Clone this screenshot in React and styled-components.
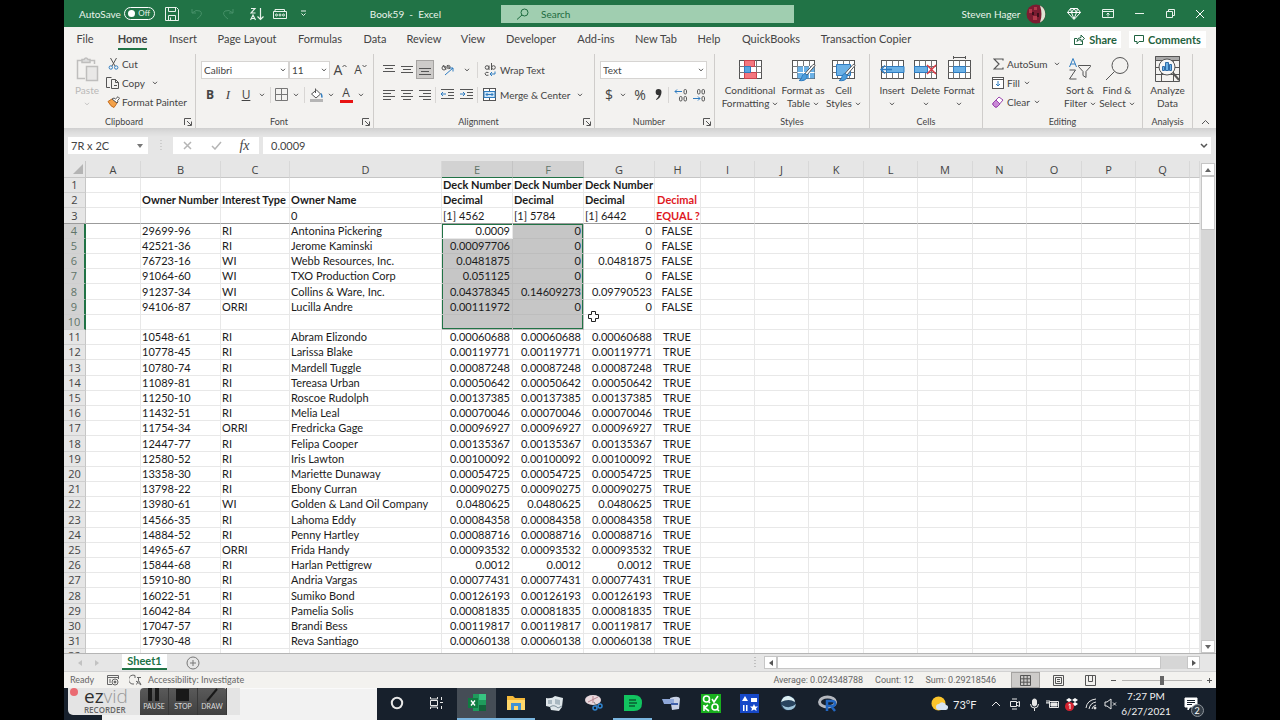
import React from "react";
import styled, { createGlobalStyle, css } from "styled-components";

const UI = `Lato, "Open Sans", sans-serif`;
const GREEN = "#217346";

const Global = createGlobalStyle`
  * { box-sizing: border-box; }
  html, body { margin: 0; background: #000; }
  body { font-family: ${UI}; font-size: 10px; color: #444; }
  button, input, select { font: inherit; color: inherit; margin: 0; padding: 0; border: 0; background: none; border-radius: 0; outline: none; }
  svg { display: block; flex: none; }
`;

/* ---------- generic parts ---------- */

const Screen = styled.div`
  min-height: 100vh;
  padding: 0 5vw;
  display: flex;
  flex-direction: column;
  background: #000;
  overflow: hidden;
`;

const Slot = styled.span`
  width: ${(p) => p.$w}px;
  flex: none;
  display: flex;
  align-items: center;
  justify-content: center;
`;

const IconButton = styled.button`
  width: ${(p) => p.$w || 18}px;
  height: ${(p) => p.$h || 19}px;
  flex: none;
  display: flex;
  align-items: center;
  justify-content: center;
  ${(p) => p.$on && css`background: #cdcbc9; border: 1px solid #a5a3a1;`}
`;

const Glyph = styled.span`
  font-size: ${(p) => p.$size || 12}px;
  font-weight: ${(p) => (p.$bold ? 700 : 400)};
  font-style: ${(p) => (p.$italic ? "italic" : "normal")};
  font-family: ${(p) => (p.$serif ? `"Liberation Serif", serif` : `"Open Sans", sans-serif`)};
  text-decoration: ${(p) => (p.$under ? "underline" : "none")};
  line-height: 14px;
`;

const Svg = ({ w = 14, h = 14, color = "#555", sw = 1, children }) => (
  <svg width={w} height={h} viewBox={`0 0 ${w} ${h}`} fill="none" stroke={color} strokeWidth={sw} aria-hidden="true">
    {children}
  </svg>
);

const Chevron = ({ color = "#555" }) => (
  <Svg w={6} h={4} color={color}><path d="M1 .8 3 2.9 5 .8" /></Svg>
);

/* ---------- title bar ---------- */

const TitleBar = styled.header`
  height: 27px;
  display: flex;
  align-items: center;
  background: ${GREEN};
  color: #e9f3ec;
`;
const TitleLeft = styled.div`
  width: 437px;
  flex: none;
  display: flex;
  align-items: center;
  padding-left: 15px;
`;
const AutoSave = styled.label`
  width: 76px;
  display: flex;
  align-items: center;
  justify-content: space-between;
`;
const Toggle = styled.input`
  appearance: none;
  display: none;
`;
const ToggleFace = styled.span`
  width: 31px;
  height: 13px;
  border: 1px solid #fff;
  border-radius: 7px;
  display: flex;
  align-items: center;
  justify-content: space-between;
  padding: 0 4px 0 3px;
  font-size: 8px;
  line-height: 11px;
  &::before { content: ""; width: 7px; height: 7px; border-radius: 50%; background: #fff; }
`;
const DocTitle = styled.span`
  margin-left: auto;
  margin-right: 60px;
  font-size: 10px;
`;
const SearchBox = styled.label`
  flex: 0 1 293px;
  height: 18px;
  display: flex;
  align-items: center;
  padding-left: 15px;
  background: #a0ceb0;
  color: #1e6b40;
`;
const SearchInput = styled.input`
  flex: 1;
  min-width: 0;
  margin-left: 11px;
  font-size: 10px;
  &::placeholder { color: #1e6b40; opacity: 1; }
`;
const TitleRight = styled.div`
  margin-left: auto;
  display: flex;
  align-items: center;
`;

/* ---------- ribbon ---------- */

const TabBar = styled.nav`
  height: 25px;
  display: flex;
  align-items: center;
  background: #f3f2f0;
  padding-right: 10px;
`;
const Tab = styled.button`
  width: ${(p) => p.$w}px;
  height: 25px;
  flex: none;
  font-size: 11px;
  white-space: nowrap;
  display: flex;
  justify-content: center;
  font-weight: ${(p) => (p.$active ? 700 : 400)};
  line-height: 20px;
  padding-top: 2px;
  span { border-bottom: 2px solid ${(p) => (p.$active ? GREEN : "transparent")}; height: 21px; }
`;
const TabActions = styled.div`
  margin-left: auto;
  display: flex;
  gap: 8px;
`;
const ActionButton = styled.button`
  height: 17px;
  width: ${(p) => p.$w}px;
  background: #fff;
  color: #1f6240;
  font-size: 11px;
  font-weight: 700;
  line-height: 16px;
  display: flex;
  align-items: center;
  justify-content: center;
  gap: 4px;
`;
const Ribbon = styled.section`
  height: 76px;
  display: flex;
  background: #f3f2f0;
`;
const Group = styled.div`
  width: ${(p) => p.$w}px;
  flex: none;
  margin: 2px 0 0;
  border-right: 1px solid #cfcdcb;
  display: flex;
  flex-direction: column;
`;
const GroupBody = styled.div`
  flex: 1;
  min-height: 0;
  display: flex;
  padding-left: ${(p) => p.$pad || 0}px;
`;
const GroupFoot = styled.div`
  height: 13px;
  display: flex;
  align-items: center;
  justify-content: center;
  padding: 0 2px;
  font-size: 9px;
  line-height: 12px;
  span { flex: 1; text-align: center; }
`;
const Stack = styled.div`
  display: flex;
  flex-direction: column;
  padding-top: ${(p) => p.$top || 0}px;
  width: ${(p) => (p.$w ? p.$w + "px" : "auto")};
  gap: ${(p) => p.$gap || 0}px;
`;
const Row = styled.div`
  display: flex;
  align-items: center;
  height: ${(p) => p.$h || 19}px;
`;
const TextButton = styled.button`
  display: flex;
  align-items: center;
  height: 19px;
  font-size: 10px;
  white-space: nowrap;
`;
const Label = styled.span`
  width: ${(p) => (p.$w ? p.$w + "px" : "auto")};
  padding-right: ${(p) => (p.$w ? 0 : 4)}px;
  text-align: left;
`;
const BigButton = styled.button`
  width: ${(p) => p.$w}px;
  height: 56px;
  flex: none;
  display: flex;
  flex-direction: column;
  align-items: center;
  font-size: 10px;
  line-height: 13px;
  white-space: nowrap;
  color: ${(p) => (p.$off ? "#b9b8b7" : "#444")};
`;
const BigIcon = styled.span`
  height: 30px;
  display: flex;
  align-items: center;
`;
const LabelLine = styled.span`
  height: 13px;
  display: flex;
  align-items: center;
  gap: 3px;
`;
const VLine = styled.span`
  width: 1px;
  height: 16px;
  margin: 0 ${(p) => p.$m || 1}px;
  background: ${(p) => (p.$clear ? "transparent" : "#d8d6d4")};
`;
const Combo = styled.span`
  display: grid;
  width: ${(p) => p.$w}px;
  height: 18px;
  align-items: center;
  border: 1px solid #d6d4d2;
  background: #fff;
  > * { grid-area: 1 / 1; }
  svg { justify-self: end; margin-right: 2px; pointer-events: none; }
`;
const Select = styled.select`
  appearance: none;
  width: 100%;
  height: 16px;
  padding-left: 2px;
  font-size: 10px;
`;
const Swatch = styled.span`
  display: flex;
  flex-direction: column;
  align-items: center;
  &::after { content: ""; width: 13px; height: 3px; background: ${(p) => p.$c}; }
`;

/* ---------- formula bar ---------- */

const FormulaBar = styled.section`
  height: 33px;
  padding: 9px 5px 7px 4px;
  display: flex;
  background: linear-gradient(#cfcfcf 0, #dcdcdc 4px, #e6e6e6 9px);
`;
const NameBox = styled.label`
  width: 80px;
  display: flex;
  align-items: center;
  background: #fff;
  padding: 0 4px 0 3px;
  input { width: 64px; flex: 1; font-size: 11px; }
`;
const FxBox = styled.div`
  width: 86px;
  display: flex;
  align-items: center;
  background: #fff;
  margin-right: 4px;
`;
const FormulaField = styled.label`
  flex: 1;
  display: flex;
  align-items: center;
  background: #fff;
  padding: 0 3px 0 8px;
  input { flex: 1; font-size: 11px; }
`;

/* ---------- worksheet ---------- */

const SheetArea = styled.main`
  height: 492px;
  flex: 1 0 auto;
  display: flex;
  background: #e6e6e6;
`;
const GridClip = styled.div`
  flex: 1;
  min-width: 0;
  height: 492px;
  overflow: hidden;
  background: #fff;
`;
const Grid = styled.table`
  width: 100%;
  table-layout: fixed;
  border-collapse: separate;
  border-spacing: 0;
  font-family: ${UI};
  font-size: 11px;
  color: #1b1b1b;
`;
const ColHead = styled.th`
  height: 17px;
  padding: 2px 0 0;
  font: 400 11px/14px "Open Sans", sans-serif;
  text-align: center;
  color: ${(p) => (p.$sel ? "#5f7468" : "#444")};
  background: ${(p) => (p.$sel ? "#d2d2d2" : "#e6e6e6")};
  border-right: 1px solid ${(p) => (p.$sel ? "#c4c4c4" : "#d8d8d8")};
  border-bottom: 1px solid ${(p) => (p.$sel ? GREEN : "#c6c6c6")};
`;
const Corner = styled.th`
  background: #e6e6e6;
  border-right: 1px solid #c6c6c6;
  border-bottom: 1px solid #c6c6c6;
  padding: 0;
  svg { margin-left: auto; }
`;
const RowHead = styled.th`
  padding: 0;
  font: 400 11px/14px "Open Sans", sans-serif;
  text-align: center;
  color: ${(p) => (p.$sel ? "#5f7468" : "#444")};
  background: ${(p) => (p.$sel ? "#d2d2d2" : "#e6e6e6")};
  border-right: ${(p) => (p.$sel ? `2px solid ${GREEN}` : "1px solid #c6c6c6")};
  border-bottom: 1px solid ${(p) => (p.$frozen ? "#9b9b9b" : "#cfcfcf")};
`;
const BodyRow = styled.tr`
  height: 15px;
  &:nth-child(5n + 3) { height: 16px; }
`;
const Cell = styled.td`
  position: relative;
  padding: 0 2px 0 1px;
  line-height: 14px;
  white-space: nowrap;
  text-align: ${(p) => p.$align || "left"};
  font-weight: ${(p) => (p.$bold ? 700 : 400)};
  color: ${(p) => (p.$red ? "#e0191f" : "inherit")};
  background: ${(p) => (p.$sel ? "#c6c6c6" : "#fff")};
  border-right: 1px solid ${(p) => (p.$sel ? "#bdbdbd" : "#e8e8e8")};
  border-bottom: 1px solid ${(p) => (p.$frozen ? "#9b9b9b" : p.$sel ? "#bdbdbd" : "#e8e8e8")};
  ${(p) => p.$edge && css`box-shadow: ${p.$edge};`}
`;
const CrossCursor = styled.span`
  position: absolute;
  left: 3px;
  top: -5px;
  z-index: 1;
`;
const VScroll = styled.div`
  width: 16px;
  padding: 2px 1px 0;
  display: flex;
  flex-direction: column;
  background: #e6e6e6;
`;
const ScrollButton = styled.button`
  width: ${(p) => (p.$row ? 13 : 14)}px;
  height: 13px;
  flex: none;
  background: #fff;
  border: 1px solid #c6c6c6;
  display: flex;
  align-items: center;
  justify-content: center;
`;
const ScrollTrack = styled.div`
  flex: 1;
  background: #d6d6d6;
`;
const ScrollThumb = styled.div`
  height: 54px;
  background: #fff;
  border: 1px solid #c6c6c6;
`;

/* ---------- sheet tabs and status bar ---------- */

const SheetBar = styled.div`
  height: 19px;
  display: flex;
  align-items: center;
  background: #e6e6e6;
  border-top: 1px solid #b5b5b5;
  border-bottom: 1px solid #d2d2d2;
  padding: 0 16px 0 7px;
`;
const SheetTab = styled.button`
  width: 45px;
  height: 16px;
  margin: 0 18px 0 10px;
  align-self: flex-start;
  background: #fff;
  color: ${GREEN};
  border-bottom: 2px solid ${GREEN};
  font-size: 11px;
  font-weight: 700;
  line-height: 14px;
`;
const Grip = styled.span`
  margin-left: auto;
  margin-right: 8px;
`;
const HScroll = styled.div`
  flex: 0 1 436px;
  height: 13px;
  display: flex;
`;
const HThumb = styled.div`
  flex: 1;
  background: #fff;
  border: 1px solid #c6c6c6;
`;
const HTail = styled.div`
  width: 26px;
  background: #d6d6d6;
`;
const StatusBar = styled.footer`
  height: 16px;
  display: flex;
  align-items: center;
  background: #f3f2ef;
  color: #666;
  font-size: 9px;
  line-height: 14px;
  padding-left: 6px;
`;
const Stats = styled.div`
  margin-left: auto;
  margin-right: 15px;
  display: flex;
  gap: 12px;
  font-family: Roboto, sans-serif;
`;
const Zoom = styled.input`
  appearance: none;
  width: 80px;
  height: 12px;
  background: linear-gradient(#b5b3b1, #b5b3b1) center / 100% 1px no-repeat;
  &::-webkit-slider-thumb { appearance: none; width: 4px; height: 9px; background: #666; }
`;

/* ---------- task bar ---------- */

const TaskBar = styled.div`
  position: relative;
  height: 32px;
  display: flex;
  background: #17202c;
`;
const StartArea = styled.div`width: 38px;`;
const SearchArea = styled.div`
  width: 275px;
  background: #f2f2f2;
  border-top: 1px solid #fafafa;
`;
const Task = styled.button`
  width: 39px;
  height: 32px;
  margin-left: ${(p) => (p.$first ? 2 : 0)}px;
  display: flex;
  align-items: center;
  justify-content: center;
  background: ${(p) => (p.$active ? "#454d56" : "transparent")};
  border-bottom: 2px solid ${(p) => (p.$open ? "#7ab6e0" : "transparent")};
`;
const Tray = styled.div`
  margin-left: auto;
  display: flex;
  align-items: center;
  color: #f0f0f0;
`;
const Temp = styled.span`
  width: 38px;
  padding-left: 1px;
  font-size: 11px;
`;
const Clock = styled.div`
  width: 60px;
  text-align: center;
  font-size: 10px;
  line-height: 15px;
`;
const Notify = styled.button`
  width: 30px;
  height: 32px;
  margin-right: 10px;
  display: grid;
  place-items: center;
  > * { grid-area: 1 / 1; }
`;
const NotifyCount = styled.span`
  width: 13px;
  height: 13px;
  margin: 12px 0 0 12px;
  border-radius: 50%;
  background: #333c46;
  border: 1px solid #8d949b;
  color: #fff;
  font-size: 9px;
  line-height: 11px;
`;
const Recorder = styled.div`
  position: absolute;
  left: 4px;
  top: 0;
  width: 172px;
  height: 27px;
  display: flex;
  background: #e4e4e4;
  border-radius: 0 0 0 5px;
`;
const RecDot = styled.span`
  width: 8px;
  height: 8px;
  margin: 0 6px 0 2px;
  border-radius: 50%;
  background: #ea6b72;
`;
const Brand = styled.div`
  width: 56px;
  color: #2f2f2f;
  font-family: "Open Sans", sans-serif;
  display: flex;
  flex-direction: column;
  b { font-weight: 400; font-size: 19px; line-height: 17px; }
  i { font-style: normal; font-weight: 300; color: #999; }
  small { font-size: 8px; line-height: 9px; font-weight: 600; color: #666; }
`;
const RecButtons = styled.div`
  display: flex;
  height: 27px;
  background: linear-gradient(#5a5a5a, #404040);
  border-radius: 4px 4px 0 0;
`;
const RecButton = styled.button`
  width: 29px;
  border-right: 1px solid #383838;
  color: #dcdcdc;
  font-size: 7px;
  line-height: 9px;
  display: flex;
  flex-direction: column;
  align-items: center;
`;

/* ---------- data ---------- */

const TABS = [["File", 42], ["Home", 53], ["Insert", 48], ["Page Layout", 80], ["Formulas", 66], ["Data", 44], ["Review", 54], ["View", 44], ["Developer", 72], ["Add-ins", 58], ["New Tab", 62], ["Help", 44], ["QuickBooks", 80], ["Transaction Copier", 110]];

const COLS = [["A", 55], ["B", 80], ["C", 69], ["D", 152], ["E", 71], ["F", 71], ["G", 71], ["H", 46], ["I", 54], ["J", 54], ["K", 55], ["L", 54], ["M", 55], ["N", 54], ["O", 55], ["P", 54], ["Q", 54], ["", 0]];

const same = (id, type, name, n) => [id, type, name, n, n, n, "TRUE"];
const ROWS = [
  ["", "", "", "Deck Number", "Deck Number", "Deck Number", ""],
  ["Owner Number", "Interest Type", "Owner Name", "Decimal", "Decimal", "Decimal", "Decimal"],
  ["", "", "0", "[1] 4562", "[1] 5784", "[1] 6442", "EQUAL ?"],
  ["29699-96", "RI", "Antonina Pickering", "0.0009", "0", "0", "FALSE"],
  ["42521-36", "RI", "Jerome Kaminski", "0.00097706", "0", "0", "FALSE"],
  ["76723-16", "WI", "Webb Resources, Inc.", "0.0481875", "0", "0.0481875", "FALSE"],
  ["91064-60", "WI", "TXO Production Corp", "0.051125", "0", "0", "FALSE"],
  ["91237-34", "WI", "Collins & Ware, Inc.", "0.04378345", "0.14609273", "0.09790523", "FALSE"],
  ["94106-87", "ORRI", "Lucilla Andre", "0.00111972", "0", "0", "FALSE"],
  ["", "", "", "", "", "", ""],
  same("10548-61", "RI", "Abram Elizondo", "0.00060688"),
  same("10778-45", "RI", "Larissa Blake", "0.00119771"),
  same("10780-74", "RI", "Mardell Tuggle", "0.00087248"),
  same("11089-81", "RI", "Tereasa Urban", "0.00050642"),
  same("11250-10", "RI", "Roscoe Rudolph", "0.00137385"),
  same("11432-51", "RI", "Melia Leal", "0.00070046"),
  same("11754-34", "ORRI", "Fredricka Gage", "0.00096927"),
  same("12447-77", "RI", "Felipa Cooper", "0.00135367"),
  same("12580-52", "RI", "Iris Lawton", "0.00100092"),
  same("13358-30", "RI", "Mariette Dunaway", "0.00054725"),
  same("13798-22", "RI", "Ebony Curran", "0.00090275"),
  same("13980-61", "WI", "Golden & Land Oil Company", "0.0480625"),
  same("14566-35", "RI", "Lahoma Eddy", "0.00084358"),
  same("14884-52", "RI", "Penny Hartley", "0.00088716"),
  same("14965-67", "ORRI", "Frida Handy", "0.00093532"),
  same("15844-68", "RI", "Harlan Pettigrew", "0.0012"),
  same("15910-80", "RI", "Andria Vargas", "0.00077431"),
  same("16022-51", "RI", "Sumiko Bond", "0.00126193"),
  same("16042-84", "RI", "Pamelia Solis", "0.00081835"),
  same("17047-57", "RI", "Brandi Bess", "0.00119817"),
  same("17930-48", "RI", "Reva Santiago", "0.00060138"),
];

/* ---------- icons ---------- */

const Lines = ({ rows, y = 1 }) => (
  <Svg w={12} h={12}>
    {rows.map(([x, w], i) => <path key={i} d={`M${x} ${y + i * 3 + 0.5}h${w}`} />)}
  </Svg>
);
const ALIGN_TOP = [[0, 12], [2, 8], [0, 12]];
const ALIGN_LEFT = [[0, 12], [0, 8], [0, 12], [0, 8]];
const ALIGN_MID = [[0, 12], [2, 8], [0, 12], [2, 8]];
const ALIGN_RIGHT = [[0, 12], [4, 8], [0, 12], [4, 8]];

const Indent = ({ right }) => (
  <Svg w={13} h={11}>
    <path d="M0 .5h13M7 3.5h6M7 6.5h6M0 9.5h13" />
    <path stroke="#2f7cc0" d={right ? "M0 5h5M3 3l2 2-2 2" : "M5 5H0M2 3 0 5l2 2"} />
  </Svg>
);
const DecimalIcon = ({ less }) => (
  <Svg w={14} h={14}>
    {less ? (
      <>
        <rect x="5.5" y="1.5" width="2.500" height="4.500" rx="1.200" /><rect x="10" y="1.500" width="2.500" height="4.500" rx="1.200" />
        <rect x="10" y="8.500" width="2.500" height="4.500" rx="1.200" />
        <path d="M1 10.500h7M6 8.500l2 2-2 2" stroke="#2f7cc0" />
      </>
    ) : (
      <>
        <rect x="10" y="1.500" width="2.500" height="4.500" rx="1.200" />
        <rect x="5.5" y="8.500" width="2.500" height="4.500" rx="1.200" /><rect x="10" y="8.500" width="2.500" height="4.500" rx="1.200" />
        <path d="M8 3.500H1M3 1.500 1 3.500l2 2" stroke="#2f7cc0" />
      </>
    )}
  </Svg>
);
const WrapIcon = () => (
  <Svg w={12} h={14}>
    <circle cx="3" cy="4.500" r="1.800" /><path d="M5 2.500V7M7.500 0v7" /><circle cx="9.500" cy="4.500" r="1.800" />
    <path d="M4.500 9.500q-3-1-3.500 1.300.500 2.400 3.500 1.400" />
    <path d="M11 8.500v2.500H6M8 9l-2 2 2 2" stroke="#2f7cc0" />
  </Svg>
);
const Launcher = () => (
  <IconButton $w={11} $h={12} aria-label="More options">
    <Svg w={8} h={8}><path d="M.5 7V.5H7M3 3l4 4M7.500 3.500v4h-4" /></Svg>
  </IconButton>
);
const TableGrid = ({ children }) => (
  <Svg w={25} h={26}>
    <rect x="1.500" y="4.500" width="22" height="18" fill="#fff" />
    <path d="M1.500 10.500h22M1.500 16.500h22M6.500 4.500v18M12.500 4.500v18M18.500 4.500v18" stroke="#777" />
    {children}
  </Svg>
);
const Brush = () => (
  <g>
    <path d="M24 9.500 16 19l-2-1.500L22 8.500q2-1 2 1Z" fill="#fff" stroke="#555" />
    <path d="M14 17.500q3 1 2 4-2 4-8 3 3-1 3-4 1-3 3-3Z" fill="#4e9edb" stroke="#2f7cc0" />
  </g>
);

const CutIcon = () => (
  <Svg w={11} h={13}>
    <path d="M2.500 1 7 9M8.500 1 4 9" />
    <circle cx="2.800" cy="10.500" r="1.700" stroke="#2f7cc0" /><circle cx="8.200" cy="10.500" r="1.700" stroke="#2f7cc0" />
  </Svg>
);
const CopyIcon = () => (
  <Svg w={14} h={14}>
    <path d="M4 11.500H.500v-10h5M5.500 3.500h4l3 3v6h-7ZM9.500 3.500v3h3M8 9.500h3" />
  </Svg>
);
const PainterIcon = () => (
  <Svg w={13} h={12}>
    <path d="M1 5.500 5 3l5 4-3 4.500Q4 11 1 5.500Z" fill="#f3a24a" stroke="#c56c1c" />
    <path d="M5 3 7 2l1.500 1L11 .7l1.500 1.500-2 2.500.5 1.300L10 7Z" fill="#fff" />
  </Svg>
);
const PasteIcon = () => (
  <Svg w={24} h={26} color="#bfbebd" sw={1.500}>
    <path d="M10 22.500H2.500v-18H7M15 4.500h4.500V8" /><path d="M7 6.500v-3h2q2-3 4 0h2v3Z" fill="#ddd" />
    <rect x="11.500" y="10.500" width="11" height="14" fill="#e9e8e7" />
  </Svg>
);

/* ---------- page sections ---------- */

function Title() {
  const c = "#e9f3ec";
  return (
    <TitleBar>
      <TitleLeft>
        <AutoSave>AutoSave<Toggle type="checkbox" /><ToggleFace>Off</ToggleFace></AutoSave>
        <IconButton $w={33} aria-label="Save">
          <Svg w={14} h={14} color={c}><path d="M.5.500h11l2 2v11H.5ZM3.500.500v4h7v-4M3.500 13.500V8.500h7v5M5.500 13.500v-3" /></Svg>
        </IconButton>
        <IconButton $w={18} aria-label="Undo"><Svg w={12} h={12} color="#469068"><path d="M1 1v4h4M1 5q4-4 8-2 4 3-3 8" /></Svg></IconButton>
        <IconButton $w={44} aria-label="Redo"><Svg w={12} h={12} color="#469068"><path d="M11 1v4H7M11 5Q7 1 3 3q-4 3 3 8" /></Svg></IconButton>
        <IconButton $w={14} aria-label="Sort descending">
          <Svg w={14} h={14} color={c} sw={1.200}><path d="M1 1.500h4L1 6h4.500M.500 13 3 8l2.500 5M1.500 11.500h3M10.500 1v11M7.500 9.500l3 3 3-3" /></Svg>
        </IconButton>
        <IconButton $w={32} aria-label="Record">
          <Svg w={14} h={10} color={c}><path d="M2 2.500V.500h9.500V3M.500 2.500h13v7H.5Z" /><circle cx="3.500" cy="6" r="1" /><circle cx="7" cy="6" r="1" /><circle cx="10.500" cy="6" r="1" /></Svg>
        </IconButton>
        <IconButton $w={14} aria-label="Customize toolbar"><Svg w={7} h={7} color={c}><path d="M1 1h5M1.500 3.500l2 2 2-2" /></Svg></IconButton>
        <DocTitle>Book59&nbsp; - &nbsp;Excel</DocTitle>
      </TitleLeft>
      <SearchBox>
        <Svg w={14} h={12} color="#1e6b40"><circle cx="8.500" cy="4.500" r="3.500" /><path d="M6 7 1 11.500" /></Svg>
        <SearchInput aria-label="Search" placeholder="Search" />
      </SearchBox>
      <TitleRight>
        <Slot $w={70}>Steven Hager</Slot>
        <Slot $w={20}>
          <svg width="20" height="20" viewBox="0 0 20 20" aria-hidden="true">
            <circle cx="10" cy="10" r="9.500" fill="#7c1c31" />
            <path d="M14 1.500a9.500 9.500 0 0 1 0 17q3-8 0-17" fill="#dfe5d5" />
            <path d="M3 5h3v4H3Zm5-2h3v3H8Zm-1 9h4v4H7Z" fill="#b23a4b" /><path d="M6 8h2v3H6Zm5 1h2v4h-2Z" fill="#3d0e1a" />
          </svg>
        </Slot>
        <IconButton $w={56} aria-label="Rewards"><Svg w={14} h={12} color="#fff"><path d="M3.500.500h7l3 4L7 11.500.500 4.500ZM.500 4.500h13M3.500.500l1 4L7 11l2.500-6.500 1-4M7 .500 4.500 4.500M7 .500l2.500 4" /></Svg></IconButton>
        <IconButton $w={12} aria-label="Ribbon display"><Svg w={12} h={9} color={c}><path d="M.500.500h11v8H.500ZM.500 2.500h11M6 7.500V4M4.500 5.500 6 4l1.500 1.500" /></Svg></IconButton>
        <IconButton $w={50} aria-label="Minimize"><Svg w={9} h={3} color={c}><path d="M0 1.500h9" /></Svg></IconButton>
        <IconButton $w={12} aria-label="Restore"><Svg w={9} h={9} color={c}><path d="M.500 2.500h6v6h-6ZM2.500 2.500v-2h6v6h-2" /></Svg></IconButton>
        <Slot $w={8} />
        <IconButton $w={32} aria-label="Close"><Svg w={10} h={10} color="#fff"><path d="m1 1 8 8M9 1 1 9" /></Svg></IconButton>
      </TitleRight>
    </TitleBar>
  );
}

const Big = ({ w, icon, lines, drop, off }) => (
  <BigButton $w={w} $off={off}>
    <BigIcon>{icon}</BigIcon>
    {lines.map((t, i) => (
      <LabelLine key={i}>{t}{drop && i === lines.length - 1 && <Chevron color={off ? "#c5c4c3" : "#555"} />}</LabelLine>
    ))}
  </BigButton>
);

const Foot = ({ children, launch }) => <GroupFoot><span>{children}</span>{launch && <Launcher />}</GroupFoot>;

function RibbonArea() {
  return (
    <Ribbon>
      <Group $w={132}>
        <GroupBody $pad={6}>
          <Big w={34} off drop lines={["Paste", ""]} icon={<PasteIcon />} />
          <Stack>
            <TextButton><Slot $w={18}><CutIcon /></Slot><Label>Cut</Label></TextButton>
            <TextButton><Slot $w={18}><CopyIcon /></Slot><Label $w={30}>Copy</Label><Chevron /></TextButton>
            <TextButton><Slot $w={18}><PainterIcon /></Slot><Label>Format Painter</Label></TextButton>
          </Stack>
        </GroupBody>
        <Foot launch>Clipboard</Foot>
      </Group>

      <Group $w={178}>
        <GroupBody $pad={5}>
          <Stack $top={6} $gap={6}>
            <Row>
              <Combo $w={88}><Select aria-label="Font"><option>Calibri</option></Select><Chevron /></Combo>
              <Combo $w={41}><Select aria-label="Font size"><option>11</option></Select><Chevron /></Combo>
              <IconButton $w={21} aria-label="Increase font size"><Glyph $size={14}>A</Glyph><Svg w={5} h={12}><path d="M.500 3 2.500 1l2 2" /></Svg></IconButton>
              <IconButton $w={19} aria-label="Decrease font size"><Glyph $size={12}>A</Glyph><Svg w={5} h={12}><path d="m.500 1 2 2 2-2" /></Svg></IconButton>
            </Row>
            <Row>
              <IconButton aria-label="Bold"><Glyph $bold>B</Glyph></IconButton>
              <IconButton aria-label="Italic"><Glyph $italic $serif $size={13}>I</Glyph></IconButton>
              <IconButton aria-label="Underline"><Glyph $under>U</Glyph></IconButton>
              <Slot $w={14}><Chevron /></Slot><VLine />
              <IconButton aria-label="Borders"><Svg w={13} h={13} color="#777"><path d="M.500.500h12v12H.500ZM6.500 0v13M0 6.500h13" /></Svg></IconButton>
              <Slot $w={12}><Chevron /></Slot><VLine $m={2} />
              <IconButton aria-label="Fill color">
                <Swatch $c="#b5b5b5"><Svg w={13} h={11}><path d="m1.500 6 5-4 4 4-4.500 4ZM5.500 5V.500" fill="#fff" /><path d="M11 5.500q1.500 3 .5 4" stroke="#2f7cc0" strokeWidth="1.500" /></Svg></Swatch>
              </IconButton>
              <Slot $w={12}><Chevron /></Slot>
              <IconButton aria-label="Font color"><Swatch $c="#e81313"><Glyph $size={12}>A</Glyph></Swatch></IconButton>
              <Slot $w={12}><Chevron /></Slot>
            </Row>
          </Stack>
        </GroupBody>
        <Foot launch>Font</Foot>
      </Group>

      <Group $w={221}>
        <GroupBody $pad={6}>
          <Stack $top={6} $gap={6}>
            <Row>
              <IconButton aria-label="Top align"><Lines rows={ALIGN_TOP} y={1} /></IconButton>
              <IconButton aria-label="Middle align"><Lines rows={ALIGN_TOP} y={2} /></IconButton>
              <IconButton $on aria-label="Bottom align"><Lines rows={ALIGN_TOP} y={4} /></IconButton>
              <VLine $clear />
              <IconButton $w={21} aria-label="Orientation">
                <Svg w={14} h={14}><circle cx="3" cy="5" r="2" /><path d="M5 6.500 2 2M6 2l3 4" /><circle cx="7.500" cy="4" r="1.600" /><path d="M4 12 12 5M12 8.500V5H9" stroke="#2f7cc0" /></Svg>
              </IconButton>
              <Slot $w={18}><Chevron /></Slot><VLine />
              <TextButton><Slot $w={21}><WrapIcon /></Slot><Label>Wrap Text</Label></TextButton>
            </Row>
            <Row>
              <IconButton aria-label="Align left"><Lines rows={ALIGN_LEFT} /></IconButton>
              <IconButton aria-label="Center"><Lines rows={ALIGN_MID} /></IconButton>
              <IconButton aria-label="Align right"><Lines rows={ALIGN_RIGHT} /></IconButton>
              <VLine />
              <IconButton $w={20} aria-label="Decrease indent"><Indent /></IconButton>
              <IconButton $w={19} aria-label="Increase indent"><Indent right /></IconButton>
              <VLine />
              <TextButton>
                <Slot $w={21}>
                  <Svg w={13} h={13}><rect x=".500" y=".500" width="12" height="12" fill="#fff" /><rect x="1" y="3.500" width="11" height="6" fill="#cfe4f5" stroke="#2f7cc0" /><path d="M6.500 0v3M6.500 10v3" /><path d="M3 6.500h7M4.500 5 3 6.500 4.500 8M8.500 5 10 6.500 8.500 8" stroke="#2f7cc0" /></Svg>
                </Slot>
                <Label $w={77}>Merge &amp; Center</Label><Chevron />
              </TextButton>
            </Row>
          </Stack>
        </GroupBody>
        <Foot launch>Alignment</Foot>
      </Group>

      <Group $w={120}>
        <GroupBody $pad={5}>
          <Stack $top={6} $gap={6}>
            <Row><Combo $w={107}><Select aria-label="Number format"><option>Text</option></Select><Chevron /></Combo></Row>
            <Row>
              <IconButton aria-label="Currency"><Glyph $size={14}>$</Glyph></IconButton>
              <Slot $w={10}><Chevron /></Slot>
              <IconButton $w={24} aria-label="Percent"><Glyph $size={14}>%</Glyph></IconButton>
              <IconButton $w={13} aria-label="Comma style"><svg width="7" height="11" viewBox="0 0 7 11" aria-hidden="true"><path d="M3.500 0a3 3 0 0 1 3 3q0 5-5 8l-.500-.600Q3.500 8.500 3.800 6A3 3 0 1 1 3.500 0Z" fill="#333" /></svg></IconButton>
              <VLine $m={3} />
              <IconButton aria-label="Increase decimal"><DecimalIcon /></IconButton>
              <IconButton aria-label="Decrease decimal"><DecimalIcon less /></IconButton>
            </Row>
          </Stack>
        </GroupBody>
        <Foot launch>Number</Foot>
      </Group>

      <Group $w={155}>
        <GroupBody>
          <Big w={70} drop lines={["Conditional", "Formatting"]} icon={<TableGrid><path d="M6.500 4.500h10v6h-10ZM6.500 16.500h12v6h-12Z" fill="#f4777f" stroke="#c9444e" /><path d="M6.500 10.500h6v6h-6Z" fill="#5aa7e0" stroke="#2f7cc0" /></TableGrid>} />
          <Big w={36} drop lines={["Format as", "Table"]} icon={<TableGrid><path d="M6.500 10.500h17v12h-17Z" fill="#6bb1e6" stroke="none" /><path d="M6.500 16.500h17M12.500 10v12M18.500 10v12" stroke="#fff" /><Brush /></TableGrid>} />
          <Big w={45} drop lines={["Cell", "Styles"]} icon={<TableGrid><path d="M5.500 8.500h14v11h-14Z" fill="#6bb1e6" stroke="#2f7cc0" /><Brush /></TableGrid>} />
        </GroupBody>
        <Foot>Styles</Foot>
      </Group>

      <Group $w={113}>
        <GroupBody $pad={5}>
          <Big w={34} drop lines={["Insert", ""]} icon={<TableGrid><path d="M6.500 10.500H24v6H6.500Z" fill="#6bb1e6" stroke="#2f7cc0" /><path d="M12 13.500H1M5 9.500l-4 4 4 4" stroke="#2f7cc0" strokeWidth="1.500" /></TableGrid>} />
          <Big w={33} drop lines={["Delete", ""]} icon={<TableGrid><path d="M1.500 10.500h13v6h-13Z" fill="#6bb1e6" stroke="#2f7cc0" /><path d="m14 9 9 9M23 9l-9 9" stroke="#d93a44" strokeWidth="1.500" /></TableGrid>} />
          <Big w={34} drop lines={["Format", ""]} icon={<TableGrid><path d="M6.500 10.500h12v6h-12Z" fill="#6bb1e6" stroke="#2f7cc0" /><path d="M6.500 1.500h12M6.500 0v3M18.500 0v3" /></TableGrid>} />
        </GroupBody>
        <Foot>Cells</Foot>
      </Group>

      <Group $w={160}>
        <GroupBody $pad={6}>
          <Stack $w={73}>
            <TextButton><Slot $w={18}><Svg w={11} h={12} sw={1.200}><path d="M10 2.500V1H1l5 5-5 5h9V9.500" /></Svg></Slot><Label $w={47}>AutoSum</Label><Chevron /></TextButton>
            <TextButton><Slot $w={18}><Svg w={12} h={12}><rect x=".500" y=".500" width="11" height="11" fill="#fff" /><path d="M.500 2.500h11" /><path d="M6 4v5M4 7l2 2 2-2" stroke="#2f7cc0" /></Svg></Slot><Label>Fill</Label><Chevron /></TextButton>
            <TextButton><Slot $w={18}><Svg w={12} h={12} color="#9b45ad"><path d="m1 7 6-6 4 3-6 7H3L1 9Z" fill="#fff" /><path d="m1 7 3-3 4 4-3 3H3L1 9Z" fill="#c98ad6" /></Svg></Slot><Label>Clear</Label><Chevron /></TextButton>
          </Stack>
          <Big w={36} drop lines={["Sort &", "Filter"]} icon={
            <Svg w={24} h={24}><path d="M1.500 10 5 1.500 8.500 10M2.800 7h4.500" stroke="#2f7cc0" /><path d="M1.500 13h6l-6 9h7M10.500 8.500h12v1l-4.500 5v6l-3-2v-4l-4.500-5Z" /></Svg>} />
          <Big w={38} drop lines={["Find &", "Select"]} icon={<Svg w={24} h={26}><circle cx="15" cy="9.500" r="8" /><path d="M9.500 15.500 1 24" /></Svg>} />
        </GroupBody>
        <Foot>Editing</Foot>
      </Group>

      <Group $w={50}>
        <GroupBody>
          <Big w={49} lines={["Analyze", "Data"]} icon={
            <Svg w={27} h={27}><path d="M1.500.500h24v25h-24ZM1.500 4.500h24M1.500 11.500h24M1.500 18.500h24M7.500 4v21M19.500 4v21" /><path d="M1.500.500h24v4h-24Z" fill="#aaa" /><circle cx="13" cy="11" r="8" fill="#f6f6f6" /><path d="m19 17 6 7" strokeWidth="2" /><path d="M8.500 10.500h2v4h-2ZM11.500 6.500h3v8h-3ZM15.500 8.500h2v6h-2Z" fill="#6bb1e6" stroke="#2f6ca8" /></Svg>} />
        </GroupBody>
        <Foot>Analysis</Foot>
      </Group>
      <GroupBody>
        <Stack $top={64} $w={22}><Row $h={12}><IconButton $w={24} $h={12} aria-label="Collapse ribbon"><Svg w={9} h={6}><path d="m1 5 3.500-3.500L8 5" /></Svg></IconButton></Row></Stack>
      </GroupBody>
    </Ribbon>
  );
}

function Sheet() {
  const g = GREEN;
  return (
    <SheetArea>
      <GridClip>
        <Grid>
          <colgroup>
            <col width="22" />
            {COLS.map(([n, w]) => <col key={n} width={w || undefined} />)}
          </colgroup>
          <thead>
            <tr>
              <Corner aria-label="Select all"><Svg w={14} h={14}><path d="M12 2v10H2Z" fill="#b4b4b4" stroke="none" /></Svg></Corner>
              {COLS.map(([n]) => <ColHead key={n} $sel={n === "E" || n === "F"}>{n}</ColHead>)}
            </tr>
          </thead>
          <tbody>
            {ROWS.map((r, i) => {
              const n = i + 1;
              const frozen = n === 3;
              const picked = n >= 4 && n <= 10;
              return (
                <BodyRow key={n}>
                  <RowHead $sel={picked} $frozen={frozen}>{n}</RowHead>
                  <Cell $frozen={frozen} />
                  {r.map((v, c) => {
                    const num = c >= 3 && c <= 5;
                    const sel = picked && (c === 3 || c === 4);
                    const edge = sel && [
                      c === 3 ? `inset 1px 0 ${g}` : `inset -1px 0 ${g}`,
                      n === 4 && `inset 0 1px ${g}`,
                      n === 10 && `inset 0 -1px ${g}`,
                    ].filter(Boolean).join(", ");
                    return (
                      <Cell
                        key={c}
                        $frozen={frozen}
                        $sel={sel && !(n === 4 && c === 3)}
                        $edge={edge}
                        $bold={n <= 2 || (frozen && c === 6)}
                        $red={n <= 3 && c === 6}
                        $align={c === 6 ? "center" : num && n > 3 ? "right" : "left"}
                      >
                        {v}
                        {n === 10 && c === 5 && (
                          <CrossCursor><Svg w={13} h={13} color="#222"><path d="M4.500 1.500h4v3h3v4h-3v3h-4v-3h-3v-4h3Z" fill="#fff" /></Svg></CrossCursor>
                        )}
                      </Cell>
                    );
                  })}
                  {COLS.slice(8).map(([k]) => <Cell key={k} $frozen={frozen} />)}
                </BodyRow>
              );
            })}
            <BodyRow><RowHead>32</RowHead>{COLS.map(([k]) => <Cell key={k} />)}</BodyRow>
          </tbody>
        </Grid>
      </GridClip>
      <VScroll>
        <ScrollButton aria-label="Scroll up"><Svg w={6} h={4}><path d="M0 4h6L3 0Z" fill="#666" stroke="none" /></Svg></ScrollButton>
        <ScrollTrack><ScrollThumb /></ScrollTrack>
        <ScrollButton aria-label="Scroll down"><Svg w={6} h={4}><path d="M0 0h6L3 4Z" fill="#666" stroke="none" /></Svg></ScrollButton>
      </VScroll>
    </SheetArea>
  );
}

function Bottom() {
  return (
    <>
      <SheetBar>
        <IconButton $w={17} $h={16} aria-label="Previous sheet"><Svg w={4} h={6}><path d="M4 0v6L0 3Z" fill="#c2c2c2" stroke="none" /></Svg></IconButton>
        <IconButton $w={17} $h={16} aria-label="Next sheet"><Svg w={4} h={6}><path d="M0 0v6l4-3Z" fill="#c2c2c2" stroke="none" /></Svg></IconButton>
        <Slot $w={7} />
        <SheetTab>Sheet1</SheetTab>
        <IconButton $w={16} $h={16} aria-label="New sheet"><Svg w={14} h={14} color="#777"><circle cx="7" cy="7" r="6" /><path d="M7 4v6M4 7h6" /></Svg></IconButton>
        <Grip><Svg w={2} h={12} color="#999"><path d="M1 0v12" strokeDasharray="1 2" /></Svg></Grip>
        <HScroll>
          <ScrollButton $row aria-label="Scroll left"><Svg w={4} h={6}><path d="M4 0v6L0 3Z" fill="#555" stroke="none" /></Svg></ScrollButton>
          <HThumb /><HTail />
          <ScrollButton $row aria-label="Scroll right"><Svg w={4} h={6}><path d="M0 0v6l4-3Z" fill="#555" stroke="none" /></Svg></ScrollButton>
        </HScroll>
      </SheetBar>
      <StatusBar>
        <Label $w={34}>Ready</Label>
        <Slot $w={18}><Svg w={12} h={11} color="#666"><path d="M11.500 4V.500H.500v9H5M.500 2.500h11M2 5h2M2 7h2" /><circle cx="8" cy="7" r="3" /><circle cx="8" cy="7" r="1" fill="#555" /></Svg></Slot>
        <Slot $w={26}><Svg w={13} h={12} color="#666"><path d="M6 1.500A4.500 4.500 0 1 0 5 10M6 1.500V4M8 3.500h4M9.500 3.500v3l-2 4M9.500 6.500l2.500 4M7 7l5 4" /></Svg></Slot>
        <span>Accessibility: Investigate</span>
        <Stats><span>Average: 0.024348788</span><span>Count: 12</span><span>Sum: 0.29218546</span></Stats>
        <IconButton $w={29} $h={16} $on aria-label="Normal view"><Svg w={11} h={11}><path d="M.500.500h10v10H.500ZM.500 3.800h10M.500 7.200h10M3.800.500v10M7.200.500v10" /></Svg></IconButton>
        <IconButton $w={36} $h={16} aria-label="Page layout view"><Svg w={11} h={11}><path d="M.500.500h10v10H.500ZM2.500 2.500h6v6h-6ZM4 4.500h3M4 6.500h3" /></Svg></IconButton>
        <IconButton $w={28} $h={16} aria-label="Page break view"><Svg w={11} h={11}><path d="M.500.500h10v10H.500ZM3.500.500v6h4v-6" /></Svg></IconButton>
        <IconButton $w={18} $h={16} aria-label="Zoom out"><Svg w={5} h={5}><path d="M0 2.500h5" /></Svg></IconButton>
        <Zoom type="range" min="0" max="100" defaultValue="50" aria-label="Zoom" />
        <IconButton $w={14} $h={16} aria-label="Zoom in"><Svg w={5} h={5}><path d="M0 2.500h5M2.500 0v5" /></Svg></IconButton>
      </StatusBar>
    </>
  );
}

function Taskbar() {
  const w = "#e8e8e8";
  return (
    <TaskBar>
      <StartArea />
      <SearchArea />
      <Task aria-label="Cortana"><Svg w={14} h={14} color={w} sw={2}><circle cx="7" cy="7" r="5.200" /></Svg></Task>
      <Task aria-label="Task view"><Svg w={14} h={12} color={w}><path d="M1.500 0v2h7V0M1.500 12v-2h7v2M1.500 3.500h7v5h-7ZM12.500 0v3M12.500 9v3M11 5.500h3" /></Svg></Task>
      <Task $first $active $open aria-label="Excel">
        <svg width="20" height="18" viewBox="0 0 20 18" aria-hidden="true"><path d="M6 0h13v17H6Z" fill="#1f9c5c" /><path d="M12 0h7v6h-7Z" fill="#37c481" /><path d="M12 11h7v6h-7Z" fill="#12643a" /><path d="M1 4h10v10H1Z" fill="#107c41" /><path d="m4 6.500 4 5M8 6.500l-4 5" stroke="#fff" strokeWidth="1.300" /></svg>
      </Task>
      <Task $open aria-label="File Explorer">
        <svg width="18" height="16" viewBox="0 0 18 16" aria-hidden="true"><path d="M0 1h6l2 2h10v12H0Z" fill="#f5b93a" /><path d="M0 5h18v10H0Z" fill="#ffd76a" /><path d="M4 8h10v7h-3v-4H7v4H4Z" fill="#3f91d4" /></svg>
      </Task>
      <Task aria-label="Notes"><svg width="19" height="17" viewBox="0 0 19 17" aria-hidden="true"><path d="M1 3q6 1 9-2l8 2-1 9-3 4-8-1-1-3-4-1Z" fill="#dfe6ea" /><path d="M3 5h4v4H3ZM10 4l5 1v5l-5-1Z" fill="#aab8c1" /><path d="M5 12q4-3 8 1l4-2" stroke="#7e8f9a" fill="none" /></svg></Task>
      <Task aria-label="Snip"><svg width="18" height="18" viewBox="0 0 18 18" aria-hidden="true"><ellipse cx="8" cy="6" rx="8" ry="5" fill="#e9d9de" /><path d="M3 8 13 3M8 2v7" stroke="#b7848f" /><path d="m9 8 3 5" stroke="#888" /><circle cx="10" cy="14" r="2" fill="none" stroke="#2f84d0" strokeWidth="1.500" /><circle cx="15" cy="12" r="2" fill="none" stroke="#2f84d0" strokeWidth="1.500" /></svg></Task>
      <Task $open aria-label="Documents"><svg width="18" height="16" viewBox="0 0 18 16" aria-hidden="true"><path d="M0 0h10q8 0 8 8t-8 8H0Z" fill="#12c460" /><path d="M5 5h7M5 8h8M5 11h6" stroke="#0a5c30" strokeWidth="1.400" /></svg></Task>
      <Task aria-label="Scanner"><svg width="19" height="16" viewBox="0 0 19 16" aria-hidden="true"><path d="M8 3q9-3 10 1l-1 10-7 1Z" fill="#c9d2e6" /><path d="M0 4h12v5H2Z" fill="#8fa7d8" /><path d="M9 9h7" stroke="#3f5fa8" strokeWidth="2" /></svg></Task>
      <Task aria-label="Search tool"><svg width="20" height="19" viewBox="0 0 20 19" fill="none" stroke="#fff" strokeWidth="1.600" aria-hidden="true"><path d="M0 0h20v19H0Z" fill="#19b01e" stroke="none" /><circle cx="5.500" cy="5" r="3" /><path d="m7 7 2 2M11 5l2 3 4-6M3 11v6M3 14l4-3M4 14l4 3" /><circle cx="14" cy="13" r="3" /><path d="m16 15 2 2" /></svg></Task>
      <Task aria-label="Tools"><svg width="19" height="19" viewBox="0 0 19 19" aria-hidden="true"><path d="M0 0h19v19H0Z" fill="#1648c8" /><path d="M2 7h6L5 2ZM11 4h6v4h-6ZM3 11h1.500v6H3ZM6 11h1.500v6H6ZM14 10l1.200 2.500H18l-2 2 .7 2.500-2.700-1.500-2.700 1.500.7-2.500-2-2h2.800Z" fill="#fff" /></svg></Task>
      <Task aria-label="Globe"><svg width="17" height="17" viewBox="0 0 17 17" aria-hidden="true"><circle cx="8" cy="8" r="7.500" fill="#28435e" /><path d="M1 7q2-7 8-6 6 2 6 6-6-4-14 0Z" fill="#dceef2" /><path d="M2 10q7 5 14-1-1 6-8 6-4 0-6-5Z" fill="#9fc4da" /></svg></Task>
      <Task aria-label="R"><svg width="20" height="17" viewBox="0 0 20 17" fill="none" aria-hidden="true"><ellipse cx="9.500" cy="7" rx="8" ry="5" stroke="#b5b8bf" strokeWidth="3" /><path d="M9 16V6h5q3 0 3 2.500T14 11H9M13 11l4 5" stroke="#2266c0" strokeWidth="2.500" /></svg></Task>

      <Tray>
        <Slot $w={26}><svg width="17" height="16" viewBox="0 0 17 16" aria-hidden="true"><circle cx="7.500" cy="7.500" r="7" fill="#fcc52c" /><path d="M8 14a3 3 0 0 1 0-6 4 4 0 0 1 7 1 2.500 2.500 0 0 1-1 5Z" fill="#d8e4f2" /></svg></Slot>
        <Temp>73°F</Temp>
        <Slot $w={12}><Svg w={10} h={6} color={w}><path d="m1 5 4-4 4 4" /></Svg></Slot>
        <Slot $w={26}><Svg w={12} h={12} color={w}><path d="M1.500 3.500h6v5h-6ZM7.500 5l3-1.500v5L7.500 7M3 1h5M3 11h5" /></Svg></Slot>
        <Slot $w={12}><Svg w={9} h={13} color={w}><rect x="2.500" y="1" width="4" height="7" rx="2" fill={w} /><path d="M.500 6q0 4 4 4t4-4M4.500 10v3" /></Svg></Slot>
        <Slot $w={26}><Svg w={14} h={10} color={w}><path d="M3.500 2.500h9v6h-9ZM1 1v3M3 1v3M0 4h4" /><path d="M5 4h6v3H5Z" fill={w} /></Svg></Slot>
        <Slot $w={12}>
          <Svg w={14} h={15}><path d="m4 1 3 2-3 2-3-2Zm6 0 3 2-3 2-3-2ZM10 5l3 2-3 2-3-2Z" fill="#fff" stroke="none" /><circle cx="4.500" cy="9.500" r="4.500" fill="#d2222f" stroke="none" /><path d="M3.500 8 5 7v5" stroke="#fff" /></Svg>
        </Slot>
        <Slot $w={26}><Svg w={12} h={12} color={w}><path d="M1 10Q2 2 11 1M4 11q1-6 7-7M7 11q.500-3 4-4" /><circle cx="10" cy="10" r="1" fill={w} /></Svg></Slot>
        <Slot $w={12}><Svg w={13} h={12} color={w}><path d="M1 4h2l4-3v10L3 8H1ZM9 4.500l3 3M12 4.500l-3 3" /></Svg></Slot>
        <Clock>7:27 PM<br />6/27/2021</Clock>
        <Notify aria-label="Notifications">
          <Svg w={15} h={14} color="#fff"><path d="M1 1h12v9H6l-2 3v-3H1Z" fill="#fff" /><path d="M3 3.500h8M3 5.500h8M3 7.500h5" stroke="#17202c" /></Svg>
          <NotifyCount>2</NotifyCount>
        </Notify>
      </Tray>

      <Recorder>
        <RecDot />
        <Brand><b>ez<i>vid</i></b><small>RECORDER</small></Brand>
        <RecButtons>
          <RecButton><Svg w={14} h={14}><path d="M1 0h4v13H1ZM8 0h4v13H8Z" fill="#191919" stroke="none" /></Svg>PAUSE</RecButton>
          <RecButton><Svg w={14} h={14}><path d="M0 1h13v12H0Z" fill="#191919" stroke="none" /></Svg>STOP</RecButton>
          <RecButton><Svg w={14} h={14} color="#191919" sw={2}><path d="M2 13 12 1" /></Svg>DRAW</RecButton>
        </RecButtons>
      </Recorder>
    </TaskBar>
  );
}

export default function App() {
  return (
    <Screen>
      <Global />
      <Title />
      <TabBar>
        {TABS.map(([t, w]) => <Tab key={t} $w={w} $active={t === "Home"}><span>{t}</span></Tab>)}
        <TabActions>
          <ActionButton $w={51}><Svg w={11} h={11} color="#1f6240"><path d="M3 4.500H.500v6h8V7M3 7.500q0-4 4-4V1l3.500 3.500L7 7.500V5.500Q4 5.500 3 7.500Z" /></Svg>Share</ActionButton>
          <ActionButton $w={77}><Svg w={10} h={10} color="#1f6240"><path d="M.500.500h9v6H5l-2 2.500v-2.500H.500Z" /></Svg>Comments</ActionButton>
        </TabActions>
      </TabBar>
      <RibbonArea />
      <FormulaBar>
        <NameBox><input aria-label="Name box" defaultValue="7R x 2C" /><Svg w={7} h={4}><path d="M0 0h6L3 4Z" fill="#777" stroke="none" /></Svg></NameBox>
        <Slot $w={25}><Svg w={2} h={12} color="#b5b5b5"><path d="M1 0v12" strokeDasharray="1 2" /></Svg></Slot>
        <FxBox>
          <IconButton $w={29} $h={17} aria-label="Cancel"><Svg w={9} h={9} color="#b5b5b5" sw={1.500}><path d="m1 1 7 7M8 1 1 8" /></Svg></IconButton>
          <IconButton $w={28} $h={17} aria-label="Enter"><Svg w={11} h={9} color="#b5b5b5" sw={1.500}><path d="m1 5 3 3 6-7" /></Svg></IconButton>
          <IconButton $w={29} $h={17} aria-label="Insert function"><Glyph $serif $italic $size={14}>fx</Glyph></IconButton>
        </FxBox>
        <FormulaField><input aria-label="Formula" defaultValue="0.0009" /><Svg w={8} h={6} sw={1.500}><path d="m1 1 3 3 3-3" /></Svg></FormulaField>
      </FormulaBar>
      <Sheet />
      <Bottom />
      <Taskbar />
    </Screen>
  );
}
